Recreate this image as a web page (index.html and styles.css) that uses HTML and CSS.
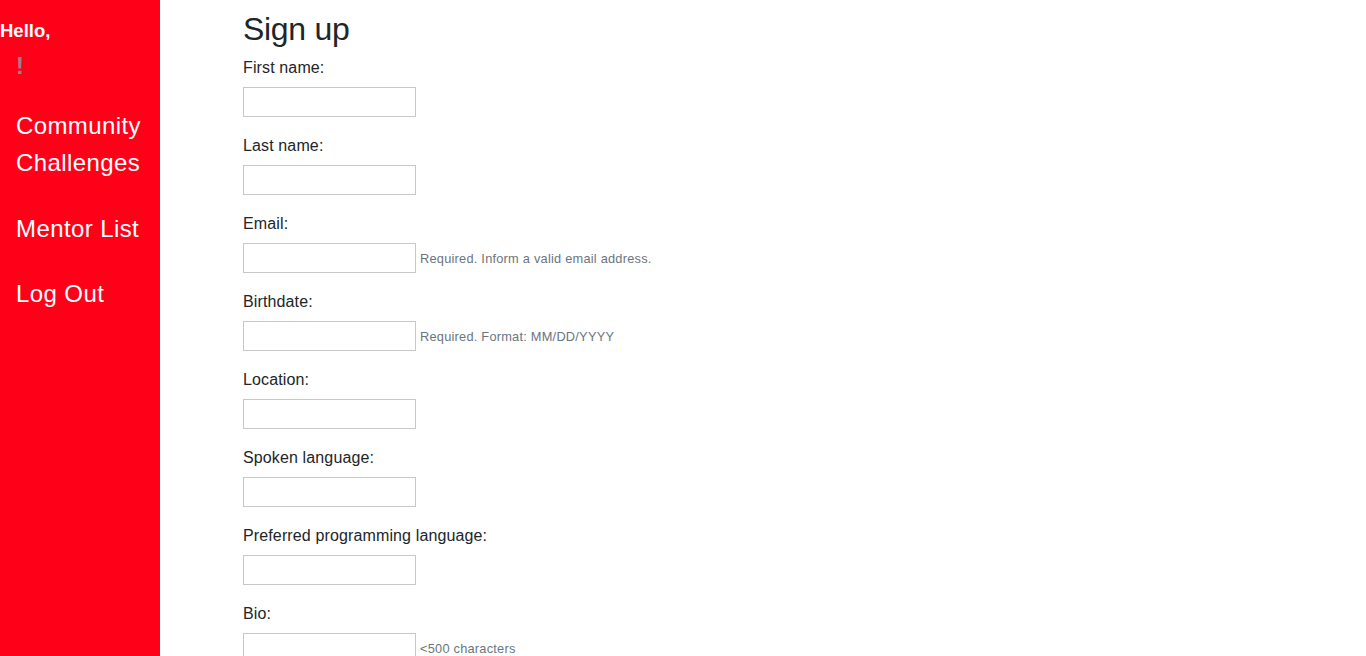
FILE: index.html
```html
<!DOCTYPE html>
<html lang="en">
<head>
<meta charset="utf-8">
<title>Sign up</title>
<link rel="stylesheet" href="styles.css">
</head>
<body>
<aside class="sidebar">
  <div class="hello">Hello,</div>
  <div class="user">!</div>
  <nav class="nav">
    <a class="nav-link" href="#">Community Challenges</a>
    <a class="nav-link nav-link-2" href="#">Mentor List</a>
    <a class="nav-link" href="#">Log Out</a>
  </nav>
</aside>
<main class="main">
  <h2 class="title">Sign up</h2>
  <form class="form">
    <div class="field"><label>First name:</label><div class="row"><input type="text"></div></div>
    <div class="field"><label>Last name:</label><div class="row"><input type="text"></div></div>
    <div class="field"><label>Email:</label><div class="row"><input type="text"><small class="help">Required. Inform a valid email address.</small></div></div>
    <div class="field"><label>Birthdate:</label><div class="row"><input type="text"><small class="help">Required. Format: MM/DD/YYYY</small></div></div>
    <div class="field"><label>Location:</label><div class="row"><input type="text"></div></div>
    <div class="field"><label>Spoken language:</label><div class="row"><input type="text"></div></div>
    <div class="field"><label>Preferred programming language:</label><div class="row"><input type="text"></div></div>
    <div class="field"><label>Bio:</label><div class="row"><input type="text"><small class="help">&lt;500 characters</small></div></div>
  </form>
</main>
</body>
</html>
```
FILE: styles.css
```css
html, body {
  margin: 0;
  padding: 0;
  height: 100%;
  overflow: hidden;
}
body {
  display: flex;
  font-family: "Liberation Sans", Arial, sans-serif;
  color: #212529;
  background: #fff;
}
.sidebar {
  width: 160px;
  flex: 0 0 160px;
  background: #ff0019;
  min-height: 100vh;
  padding-top: 19px;
  box-sizing: border-box;
}
.hello {
  color: #fff;
  font-size: 18.5px;
  font-weight: 700;
  line-height: 24px;
}
.user {
  color: #8a8a8a;
  font-size: 24px;
  font-weight: 700;
  line-height: 36px;
  padding-left: 16px;
  margin-top: 5px;
}
.nav {
  display: flex;
  flex-direction: column;
  gap: 28px;
  margin-top: 23px;
  padding: 0 16px;
}
.nav-link {
  color: #fff;
  font-size: 24px;
  line-height: 37px;
  letter-spacing: 0.4px;
  text-decoration: none;
}
.nav-link-2 {
  margin-top: 1px;
}
.main {
  flex: 1;
  padding: 10px 0 0 83px;
}
.title {
  margin: 0 0 8px;
  font-size: 32px;
  font-weight: 500;
  line-height: 1.2;
  letter-spacing: -0.3px;
}
.form {
  display: flex;
  flex-direction: column;
  gap: 17px;
}
.field label {
  display: block;
  font-size: 16px;
  line-height: 24px;
  letter-spacing: 0.13px;
  margin-bottom: 7px;
}
.row {
  display: flex;
  align-items: center;
  gap: 4px;
}
.row input {
  width: 173px;
  height: 30px;
  box-sizing: border-box;
  border: 1px solid #c8c8c8;
  margin: 0;
  padding: 2px 4px;
  font: inherit;
}
.help {
  font-size: 12.8px;
  letter-spacing: 0.23px;
  color: #6c757d;
  padding-top: 1px;
}
```
